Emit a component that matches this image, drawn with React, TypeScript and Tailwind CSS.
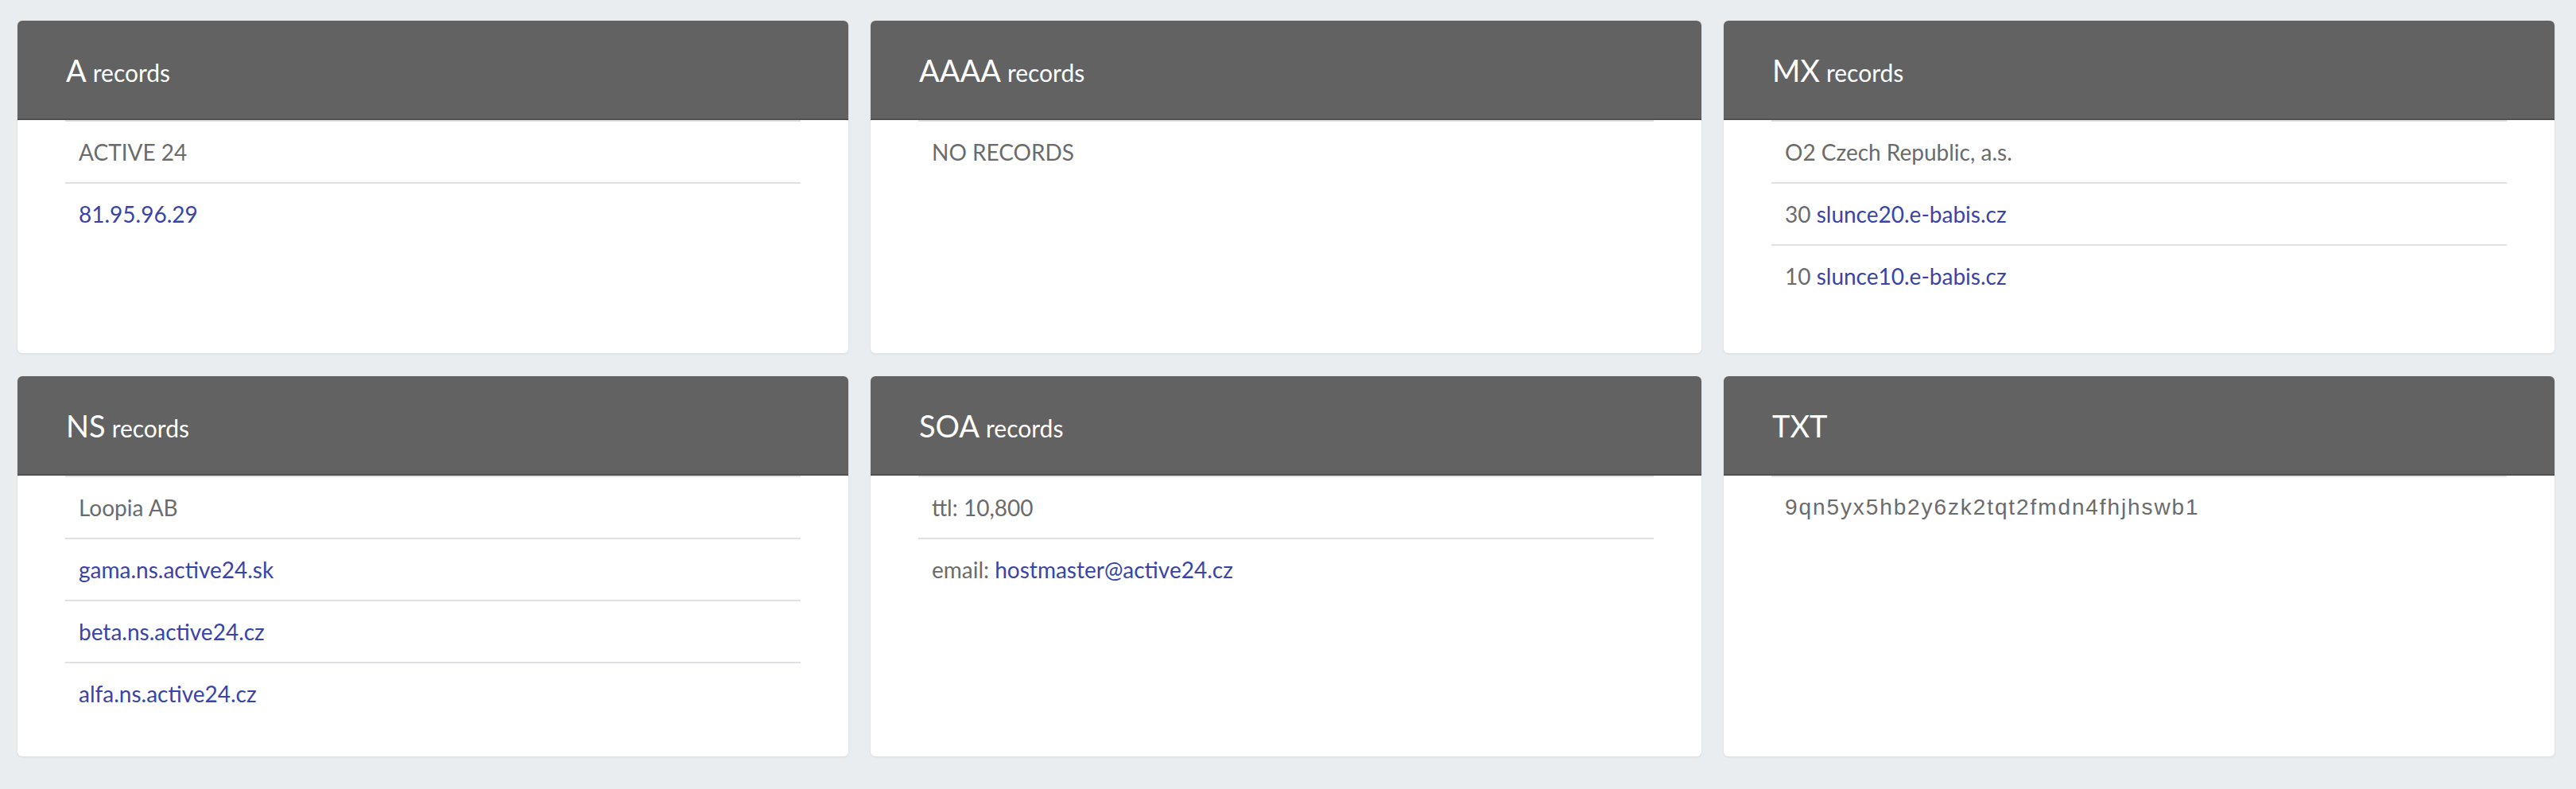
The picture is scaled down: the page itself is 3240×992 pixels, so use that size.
import React from 'react';

type Part = { text: string; link?: boolean };
type Card = { type: string; suffix?: string; rows: Part[][]; raw?: boolean };

const cards: Card[] = [
  { type: 'A', suffix: 'records', rows: [[{ text: 'ACTIVE 24' }], [{ text: '81.95.96.29', link: true }]] },
  { type: 'AAAA', suffix: 'records', rows: [[{ text: 'NO RECORDS' }]] },
  {
    type: 'MX',
    suffix: 'records',
    rows: [
      [{ text: 'O2 Czech Republic, a.s.' }],
      [{ text: '30 ' }, { text: 'slunce20.e-babis.cz', link: true }],
      [{ text: '10 ' }, { text: 'slunce10.e-babis.cz', link: true }],
    ],
  },
  {
    type: 'NS',
    suffix: 'records',
    rows: [
      [{ text: 'Loopia AB' }],
      [{ text: 'gama.ns.active24.sk', link: true }],
      [{ text: 'beta.ns.active24.cz', link: true }],
      [{ text: 'alfa.ns.active24.cz', link: true }],
    ],
  },
  {
    type: 'SOA',
    suffix: 'records',
    rows: [[{ text: 'ttl: 10,800' }], [{ text: 'email: ' }, { text: 'hostmaster@active24.cz', link: true }]],
  },
  { type: 'TXT', raw: true, rows: [[{ text: '9qn5yx5hb2y6zk2tqt2fmdn4fhjhswb1' }]] },
];

function RecordCard({ card }: { card: Card }) {
  return (
    <div className="flex flex-col overflow-hidden rounded-[6px] bg-white shadow-[0_1px_3px_rgba(0,0,0,0.08)]">
      <div className="flex h-[125px] items-center border-b-2 border-[#515151] bg-[#626262] pl-[61px] text-white">
        <h3 className="text-[38px] leading-none font-normal">
          {card.type}
          {card.suffix && <small className="ml-[8px] text-[30px]">{card.suffix}</small>}
        </h3>
      </div>
      <ul className="mx-[60px] divide-y-2 divide-[#dfe1e5] border-t-2 border-[#dfe1e5]">
        {card.rows.map((row, i) => (
          <li
            key={i}
            className={
              card.raw
                ? "px-[17px] py-[17px] font-['Liberation_Sans',sans-serif] text-[28px] leading-[42px] tracking-[1.9px] text-[#6b6b6b]"
                : 'px-[17px] py-[17px] text-[28px] leading-[42px] text-[#6b6b6b]'
            }
          >
            {row.map((p, j) =>
              p.link ? (
                <a key={j} className="text-[#3a44a8]">
                  {p.text}
                </a>
              ) : (
                <span key={j}>{p.text}</span>
              )
            )}
          </li>
        ))}
      </ul>
    </div>
  );
}

export default function App() {
  return (
    <div className="min-h-[992px] bg-[#e9edf0] pt-[26px] pr-[27px] pl-[22px] font-['Lato',sans-serif]">
      <div className="grid grid-cols-3 grid-rows-[418px_478px] gap-x-[28px] gap-y-[29px]">
        {cards.map((c) => (
          <RecordCard key={c.type} card={c} />
        ))}
      </div>
    </div>
  );
}
